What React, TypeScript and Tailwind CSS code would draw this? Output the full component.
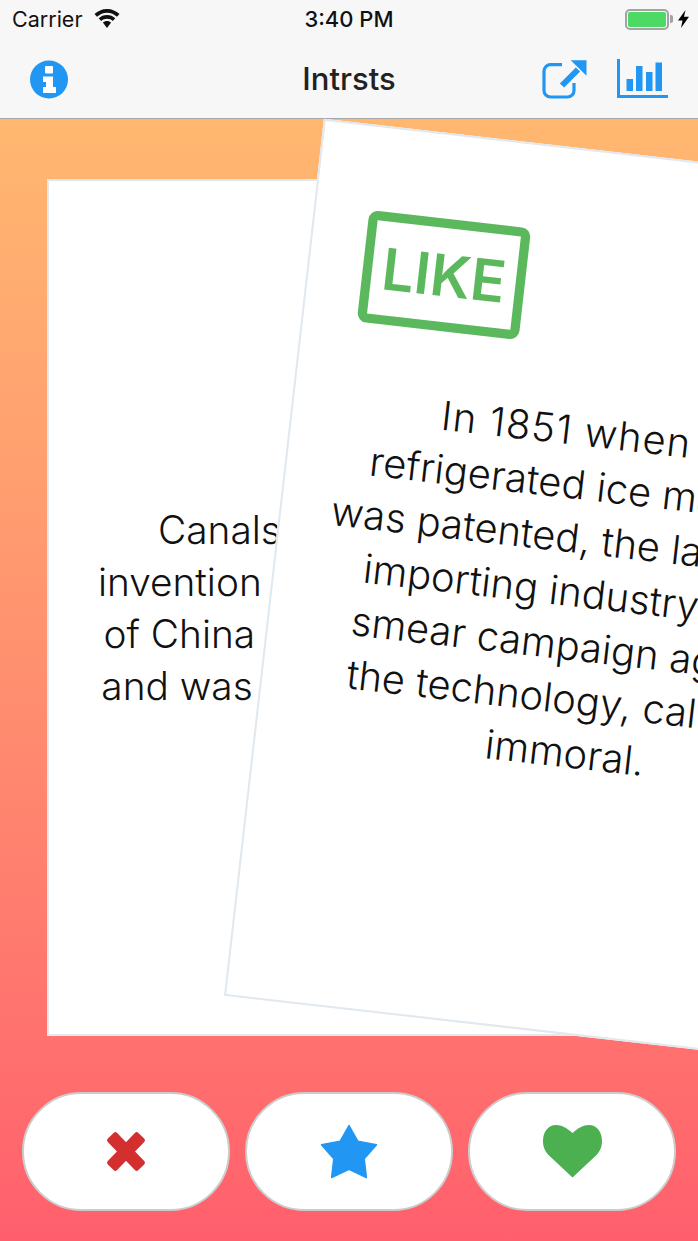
function InfoIcon() {
  return (
    <svg width="38" height="39" viewBox="0 0 38 39">
      <circle cx="19" cy="19.500" r="19" fill="#2196f3" />
      <rect x="15" y="6" width="8" height="7.500" rx="1" fill="#fff" />
      <path d="M13 16.500H23V27H26V33H13V27H16V22H13Z" fill="#fff" />
    </svg>
  );
}

function Wifi() {
  return (
    <svg width="26" height="20" viewBox="0 0 26 20" fill="#111">
      <path d="M13 0C8 0 3.800 2 0.500 5L3 7.800C5.700 5.300 9.200 3.700 13 3.700S20.300 5.300 23 7.800L25.500 5C22.200 2 18 0 13 0Z" />
      <path d="M13 6C9.700 6 6.900 7.200 4.700 9.300L7.200 12C8.700 10.600 10.700 9.700 13 9.700S17.300 10.600 18.800 12L21.300 9.300C19.100 7.200 16.300 6 13 6Z" />
      <path d="M13 12C11.400 12 10 12.600 8.900 13.600L13 19L17.100 13.600C16 12.600 14.600 12 13 12Z" />
    </svg>
  );
}

function Battery() {
  return (
    <div className="flex items-center -mr-[3px]">
      <div className="w-[44px] h-[21px] rounded-[5px] border-2 border-[#a3a3a3] p-[1px]">
        <div className="w-full h-full rounded-[2px] bg-[#4cd964]" />
      </div>
      <div className="w-[3px] h-[8px] ml-[1px] rounded-r-[2px] bg-[#a3a3a3]" />
      <svg className="ml-[5px]" width="11" height="18" viewBox="0 0 11 18" fill="#000">
        <path d="M7.500 0L0 10.500H4.500L3 18L11 6.800H6Z" />
      </svg>
    </div>
  );
}

function ShareIcon() {
  return (
    <svg width="45" height="39" viewBox="0 0 45 39" fill="none" stroke="#2196f3">
      <path d="M20 4.700H8.500A6.500 6.500 0 0 0 2 11.200V30.500A6.500 6.500 0 0 0 8.500 37H25.500A6.500 6.500 0 0 0 32 30.500V23" strokeWidth="3.200" />
      <path d="M20 25.500L36 9.500" strokeWidth="6" />
      <path d="M28.700 0.300H44.500V15.700Z" fill="#2196f3" stroke="none" />
    </svg>
  );
}

function ChartIcon() {
  return (
    <svg width="51" height="40" viewBox="0 0 51 40" fill="#2196f3">
      <rect x="0" y="0" width="3" height="39" />
      <rect x="0" y="36" width="51" height="3" />
      <rect x="9.500" y="20" width="6.500" height="12" />
      <rect x="19" y="7" width="6.500" height="25" />
      <rect x="29" y="13" width="6.500" height="19" />
      <rect x="38.500" y="3.500" width="6.500" height="28.500" />
    </svg>
  );
}

function CrossIcon() {
  return (
    <svg width="40" height="41" viewBox="0 0 40 41" fill="#d32f2f">
      <rect x="-2" y="14" width="44" height="13" rx="2.500" transform="rotate(46 20 20.500)" />
      <rect x="-2" y="14" width="44" height="13" rx="2.500" transform="rotate(-46 20 20.500)" />
    </svg>
  );
}

function StarIcon() {
  return (
    <svg width="58" height="55" viewBox="0 0 58 55" fill="#2196f3" stroke="#2196f3" strokeWidth="1.500" strokeLinejoin="round">
      <path d="M29 1.500L37.900 17.300L56.500 20.700L44.200 34.700L46.400 53.500L29 45.300L11.600 53.500L13.800 34.700L1.500 20.700L20.100 17.300Z" />
    </svg>
  );
}

function HeartIcon() {
  return (
    <svg width="59" height="53" viewBox="0 0 59 53" fill="#4caf50">
      <path d="M29.500 52.500L5.500 30C2 26 0 22 0 16C0 7 5 0 13 0C19 0 24 3 29.500 8C35 3 40 0 46 0C54 0 59 7 59 16C59 22 57 26 53.500 30Z" />
    </svg>
  );
}

function ActionButton({ children }: { children: React.ReactNode }) {
  return (
    <button className="flex-1 h-[119px] flex items-center justify-center rounded-full bg-white border-2 border-[#cccccc]">
      {children}
    </button>
  );
}

export default function App() {
  return (
    <div className="w-[698px] h-[1241px] overflow-hidden flex flex-col font-['Inter',sans-serif] text-[#111]">
      {/* Status bar + nav */}
      <header className="h-[119px] shrink-0 bg-[#f7f7f7] border-b border-[#a7a7a7]">
        <div className="h-[38px] grid grid-cols-[1fr_auto_1fr] items-center px-3">
          <div className="flex items-center gap-[12px] text-[21.5px]">
            <span>Carrier</span>
            <Wifi />
          </div>
          <span className="text-[22px] font-medium">3:40 PM</span>
          <div className="flex justify-end">
            <Battery />
          </div>
        </div>
        <div className="h-[80px] pt-[2px] grid grid-cols-[1fr_auto_1fr] items-center px-[30px]">
          <InfoIcon />
          <span className="text-[31px] font-medium text-[#222]">Intrsts</span>
          <div className="flex justify-end items-center gap-[30px]">
            <ShareIcon />
            <ChartIcon />
          </div>
        </div>
      </header>

      <main className="flex-1 flex flex-col bg-gradient-to-b from-[#ffb870] to-[#ff5f6d]">
        {/* Card stack */}
        <div className="relative h-[857px] mx-[47px] mt-[60px] shrink-0">
          <div className="h-full flex items-center justify-center bg-white border-2 border-[#e1e8ee] text-[38.8px] leading-[52px] font-light text-center">
            <p className="whitespace-nowrap">
              Canals are a Chinese
              <br />
              invention <span className="tracking-[-0.3px]">from the northeast</span>
              <br />
              of China in the fifth century
              <br />
              and was used for transport.
            </p>
          </div>

          {/* Swiped card */}
          <div className="absolute inset-0 flex items-center justify-center bg-white border-2 border-[#e1e8ee] text-[38.8px] leading-[52px] font-light text-center translate-x-[234px] -translate-y-[15px] rotate-[6.5deg] scale-[1.03]">
            <div className="absolute left-[52px] top-[81px] w-[158px] h-[109px] flex items-center justify-center rounded-[9px] border-[9px] border-[#5cb85c] text-[#5cb85c] text-[56px] font-semibold leading-none">
              LIKE
            </div>
            <p className="whitespace-nowrap">
              <span className="tracking-[1px]">In 1851 when</span> the
              <br />
              refrigerated ice machine
              <br />
              was patented, the large ice-
              <br />
              importing industry ran a
              <br />
              smear campaign against
              <br />
              the technology, calling it
              <br />
              immoral.
            </p>
          </div>
        </div>

        {/* Actions */}
        <div className="flex gap-[15.5px] px-[22px] mt-[56px]">
          <ActionButton>
            <CrossIcon />
          </ActionButton>
          <ActionButton>
            <StarIcon />
          </ActionButton>
          <ActionButton>
            <HeartIcon />
          </ActionButton>
        </div>
      </main>
    </div>
  );
}
